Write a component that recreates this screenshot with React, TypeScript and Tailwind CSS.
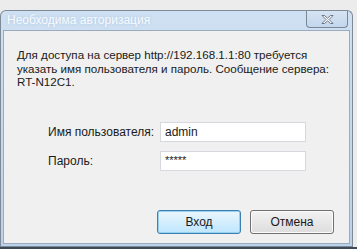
const font = "font-['Liberation_Sans',Arial,sans-serif]"

function CloseGlyph() {
  return (
    <svg width="13" height="11" viewBox="0 0 13 11">
      <path
        d="M1 1.5 L3.5 1.5 L6.5 4.2 L9.5 1.5 L12 1.5 L8 5.5 L12 9.5 L9.5 9.5 L6.5 6.8 L3.5 9.5 L1 9.5 L5 5.5 Z"
        fill="#ffffff"
        stroke="#5c6a79"
        strokeWidth="0.9"
        strokeLinejoin="round"
      />
    </svg>
  )
}

export default function App() {
  return (
    <div className={`flex h-[249px] w-[357px] flex-col overflow-hidden bg-[#ececec] ${font}`}>
      <div className="h-[10px] shrink-0" />
      <div className="mr-[4px] flex flex-1 flex-col rounded-t-[6px] border border-b-0 border-[#7d8a98] bg-gradient-to-b from-[#cfe0f2] to-[#bcd2ea] px-[2px] pb-[2px]">
        <div className="flex h-[19px] shrink-0 items-start justify-between">
          <span className="pl-[4px] pt-[2px] text-[12px] leading-[15px] text-[#f7fbff] [text-shadow:0_0_3px_#a9c3e0]">
            Необходима авторизация
          </span>
          <div className="mr-[2px] flex h-[17px] w-[42px] items-center justify-center rounded-b-[4px] border border-t-0 border-[#7a8796] bg-gradient-to-b from-[#d6e4f3] to-[#c3d6ec]">
            <CloseGlyph />
          </div>
        </div>
        <div className="flex flex-1 flex-col border border-[#9aabbf] bg-[#f0f0f0]">
          <p className="whitespace-nowrap pl-[13px] pt-[17px] text-[11.6px] leading-[13.5px] text-[#1a1a1a]">
            Для доступа на сервер http://192.168.1.1:80 требуется
            <br />
            указать имя пользователя и пароль. Сообщение сервера:
            <br />
            RT-N12C1.
          </p>
          <div className="mt-[33px] flex flex-col gap-[9px] pl-[44px] text-[12px] text-[#1a1a1a]">
            <div className="flex items-center">
              <span className="w-[112px]">Имя пользователя:</span>
              <div className="flex h-[20px] w-[146px] items-center border border-[#d5d9de] bg-white px-[4px]">admin</div>
            </div>
            <div className="flex items-center">
              <span className="w-[112px]">Пароль:</span>
              <div className="flex h-[20px] w-[146px] items-center border border-[#d5d9de] bg-white px-[4px] text-[11px]">*****</div>
            </div>
          </div>
          <div className="mt-auto flex justify-end gap-[9px] pb-[9px] pr-[15px] text-[12px] text-[#1a1a1a]">
            <div className="flex h-[24px] w-[84px] items-center justify-center rounded-[3px] border border-[#3c7fb1] bg-gradient-to-b from-[#eaf6fd] to-[#bee6fd] shadow-[inset_0_0_0_1px_#98d1ef]">
              Вход
            </div>
            <div className="flex h-[24px] w-[84px] items-center justify-center rounded-[3px] border border-[#707070] bg-gradient-to-b from-[#f2f2f2] to-[#dddddd] shadow-[inset_0_0_0_1px_#fcfcfc]">
              Отмена
            </div>
          </div>
        </div>
      </div>
      <div className="mr-[4px] h-[1px] shrink-0 bg-[#7d8a98]" />
      <div className="h-[2px] shrink-0 bg-[#3d4b59]" />
    </div>
  )
}
